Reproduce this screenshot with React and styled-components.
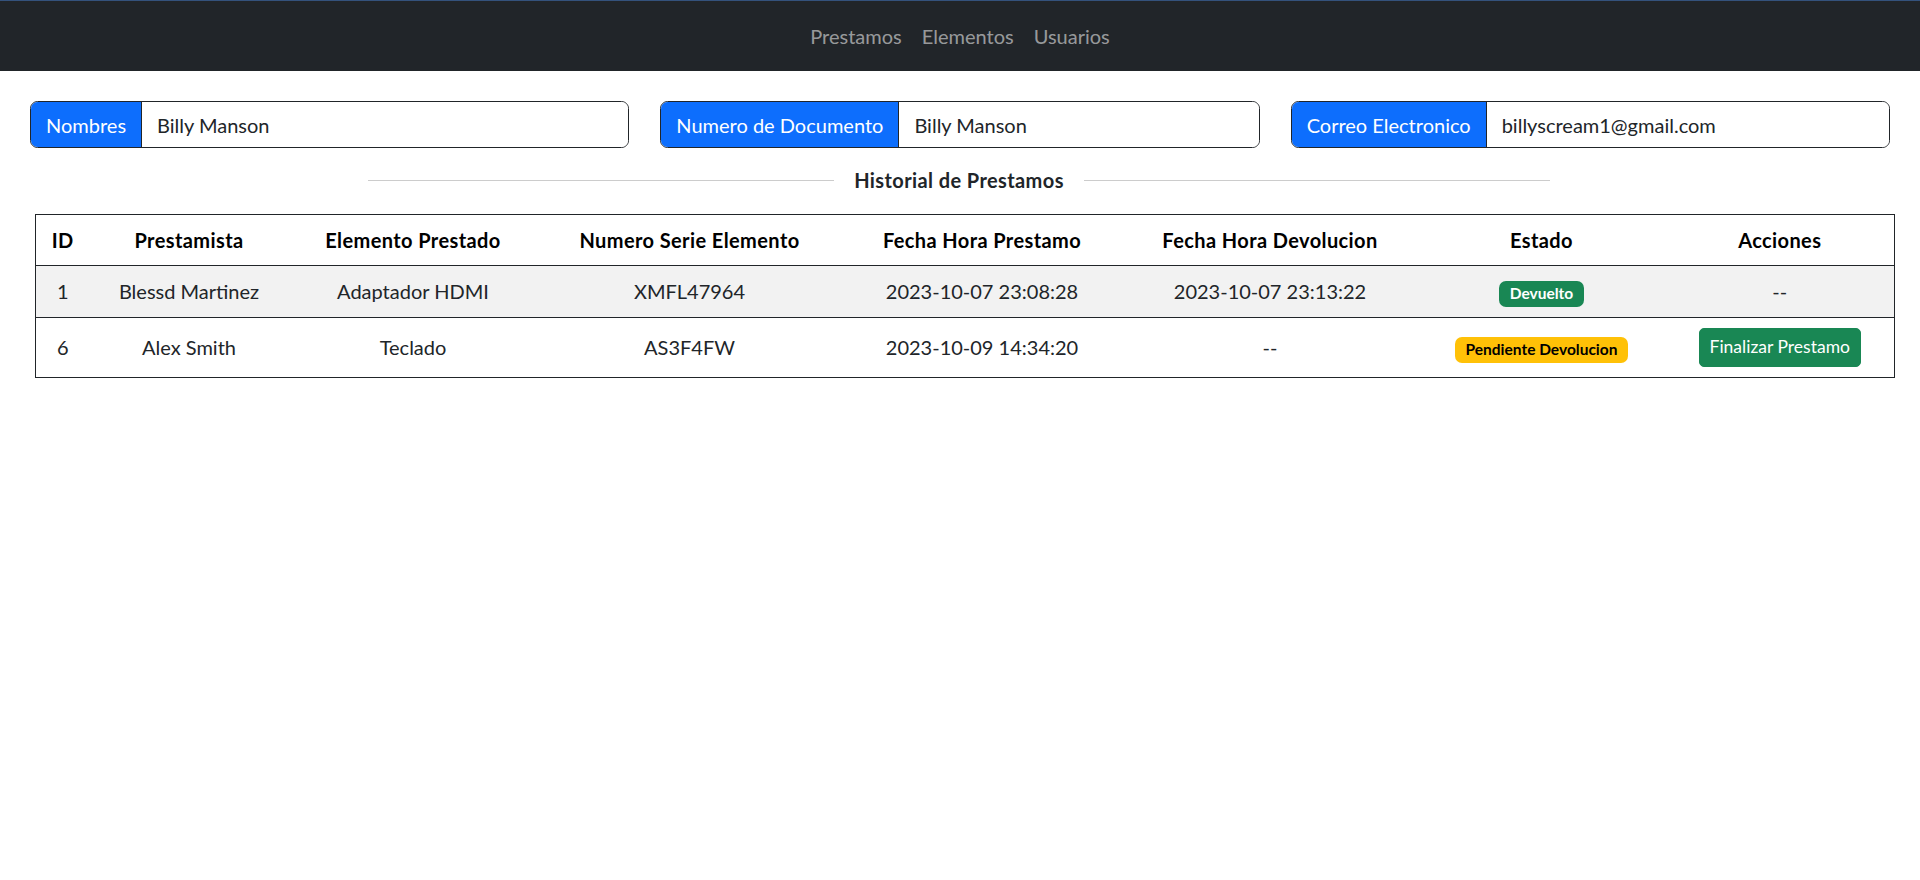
import React from "react";
import styled, { createGlobalStyle } from "styled-components";

const GlobalStyle = createGlobalStyle`
  body {
    margin: 0;
    background: #fff;
    font-family: Lato, "Noto Sans", "Liberation Sans", sans-serif;
    font-size: 20px;
    line-height: 1.5;
    color: #212529;
  }
  * {
    box-sizing: border-box;
  }
`;

const Navbar = styled.nav`
  height: 71px;
  background: #212529;
  border-top: 1px solid #34527c;
  display: flex;
  justify-content: center;
  align-items: center;
`;

const NavLink = styled.a`
  padding: 0 10px;
  color: rgba(255, 255, 255, 0.55);
  text-decoration: none;
  font-size: 20px;
`;

const Main = styled.main`
  padding-top: 30px;
  position: relative;
`;

const InputRow = styled.div`
  display: grid;
  grid-template-columns: repeat(3, 1fr);
  gap: 31px;
  padding: 0 30px;
`;

const InputGroup = styled.div`
  display: flex;
  height: 47px;
  border: 1px solid #212529;
  border-radius: 7.5px;
  overflow: hidden;
`;

const GroupLabel = styled.span`
  display: flex;
  align-items: center;
  padding: 0 15px;
  background: #0d6efd;
  color: #fff;
  border-right: 1px solid #212529;
  white-space: nowrap;
`;

const GroupField = styled.input`
  flex: 1;
  min-width: 0;
  border: none;
  outline: none;
  padding: 0 15px;
  font: inherit;
  color: #212529;
  background: #fff;
`;

const SectionTitle = styled.div`
  width: 1182px;
  margin: 17px auto 0;
  display: flex;
  align-items: center;
  gap: 20px;
  transform: translateX(-1px);
`;

const Rule = styled.span`
  flex: 1;
  height: 1px;
  background: #cccccc;
`;

const TitleText = styled.h5`
  margin: 0;
  font-size: 20px;
  font-weight: 700;
  line-height: 30px;
  letter-spacing: 0.4px;
  color: #212529;
`;

const Table = styled.table`
  margin: 19px 0 0 35px;
  width: 1859px;
  table-layout: fixed;
  border-collapse: collapse;
  border: 1px solid #212529;
`;

const HeadCell = styled.th`
  padding: 10px;
  font-weight: 700;
  color: #000;
  text-align: center;
  line-height: 30px;
  letter-spacing: 0.4px;
  white-space: nowrap;
`;

const Row = styled.tr`
  border-top: 1px solid #212529;
  background: ${(p) => (p.$striped ? "#f2f2f2" : "#fff")};
`;

const Cell = styled.td`
  padding: 10px;
  text-align: center;
  vertical-align: middle;
  line-height: 30px;
  color: #212529;
  white-space: nowrap;
`;

const Badge = styled.span`
  display: inline-block;
  padding: 5px 11px;
  font-size: 15.5px;
  font-weight: 700;
  line-height: 1;
  border-radius: 7px;
  vertical-align: middle;
  background: ${(p) => (p.$tone === "warning" ? "#ffc107" : "#198754")};
  color: ${(p) => (p.$tone === "warning" ? "#000" : "#fff")};
`;

const ActionButton = styled.button`
  padding: 5.5px 10px;
  font-family: inherit;
  font-size: 17.5px;
  line-height: 1.5;
  color: #fff;
  background: #198754;
  border: 1px solid #198754;
  border-radius: 5px;
  vertical-align: middle;
`;

const Cursor = styled.svg`
  position: absolute;
  left: 1618px;
  top: 436px;
`;

const columns = [
  { label: "ID", width: 54 },
  { label: "Prestamista", width: 199 },
  { label: "Elemento Prestado", width: 249 },
  { label: "Numero Serie Elemento", width: 304 },
  { label: "Fecha Hora Prestamo", width: 281 },
  { label: "Fecha Hora Devolucion", width: 295 },
  { label: "Estado", width: 248 },
  { label: "Acciones", width: 229 },
];

const loans = [
  {
    id: 1,
    lender: "Blessd Martinez",
    item: "Adaptador HDMI",
    serial: "XMFL47964",
    lentAt: "2023-10-07 23:08:28",
    returnedAt: "2023-10-07 23:13:22",
    returned: true,
  },
  {
    id: 6,
    lender: "Alex Smith",
    item: "Teclado",
    serial: "AS3F4FW",
    lentAt: "2023-10-09 14:34:20",
    returnedAt: null,
    returned: false,
  },
];

const fields = [
  { label: "Nombres", value: "Billy Manson" },
  { label: "Numero de Documento", value: "Billy Manson" },
  { label: "Correo Electronico", value: "billyscream1@gmail.com" },
];

export default function App() {
  return (
    <>
      <GlobalStyle />
      <Navbar>
        <NavLink href="#">Prestamos</NavLink>
        <NavLink href="#">Elementos</NavLink>
        <NavLink href="#">Usuarios</NavLink>
      </Navbar>
      <Main>
        <InputRow>
          {fields.map((f) => (
            <InputGroup key={f.label}>
              <GroupLabel>{f.label}</GroupLabel>
              <GroupField readOnly value={f.value} />
            </InputGroup>
          ))}
        </InputRow>

        <SectionTitle>
          <Rule />
          <TitleText>Historial de Prestamos</TitleText>
          <Rule />
        </SectionTitle>

        <Table>
          <colgroup>
            {columns.map((c) => (
              <col key={c.label} style={{ width: c.width }} />
            ))}
          </colgroup>
          <thead>
            <tr>
              {columns.map((c) => (
                <HeadCell key={c.label}>{c.label}</HeadCell>
              ))}
            </tr>
          </thead>
          <tbody>
            {loans.map((l, i) => (
              <Row key={l.id} $striped={i % 2 === 0}>
                <Cell>{l.id}</Cell>
                <Cell>{l.lender}</Cell>
                <Cell>{l.item}</Cell>
                <Cell>{l.serial}</Cell>
                <Cell>{l.lentAt}</Cell>
                <Cell>{l.returnedAt || "--"}</Cell>
                <Cell>
                  {l.returned ? (
                    <Badge>Devuelto</Badge>
                  ) : (
                    <Badge $tone="warning">Pendiente Devolucion</Badge>
                  )}
                </Cell>
                <Cell>
                  {l.returned ? "--" : <ActionButton>Finalizar Prestamo</ActionButton>}
                </Cell>
              </Row>
            ))}
          </tbody>
        </Table>

        <Cursor width="14" height="20" viewBox="0 0 14 20">
          <path
            d="M1 1 L1 16 L4.5 12.5 L7 18.5 L9.5 17.5 L7 11.5 L12 11.5 Z"
            fill="#fff"
            stroke="#333"
            strokeWidth="1"
            strokeLinejoin="round"
          />
        </Cursor>
      </Main>
    </>
  );
}
